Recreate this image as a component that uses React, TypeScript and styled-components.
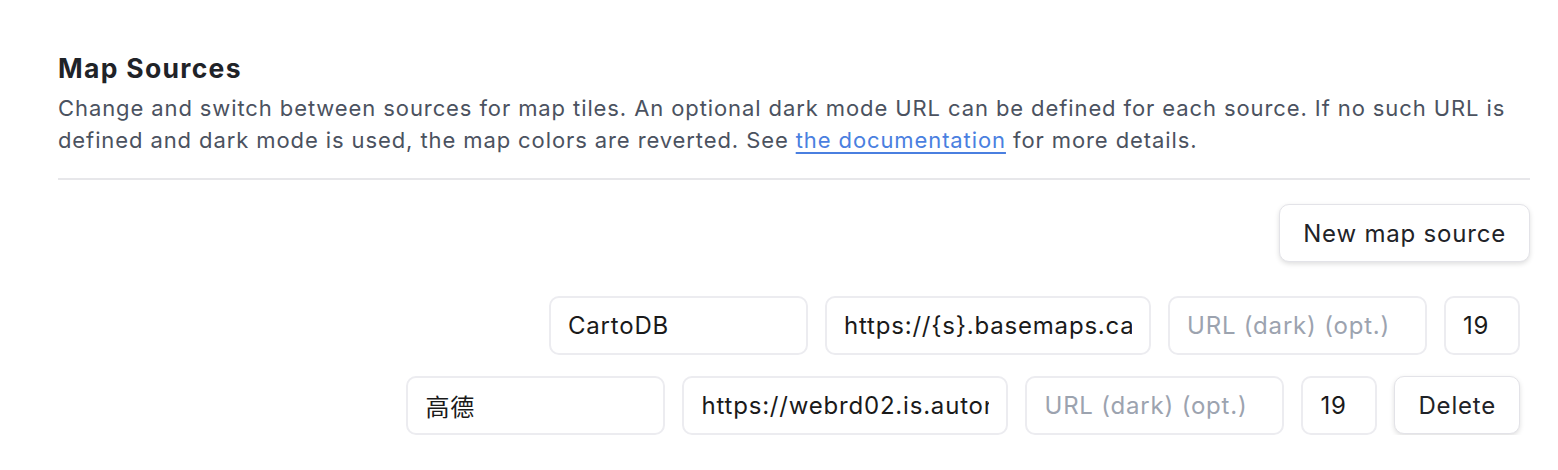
import React from "react";
import styled, { createGlobalStyle } from "styled-components";

const Global = createGlobalStyle`
  html, body { margin: 0; padding: 0; background: #ffffff; }
  body { font-family: Inter, "Noto Sans CJK SC", "Noto Sans", sans-serif; }
  * { box-sizing: border-box; }
`;

const Page = styled.div`
  padding: 49px 28px 0 58px;
`;

const Title = styled.h2`
  margin: 0;
  font-size: 26.5px;
  line-height: 38px;
  font-weight: 700;
  letter-spacing: 1.3px;
  color: #1f2328;
`;

const Description = styled.p`
  margin: 5px 0 0;
  font-size: 22px;
  line-height: 32px;
  letter-spacing: 0.9px;
  color: #4b5260;
`;

const DocLink = styled.a`
  color: #4a7fe0;
  text-decoration: underline;
  text-decoration-thickness: 1.5px;
  text-underline-offset: 4px;
`;

const Divider = styled.hr`
  margin: 22px 0 0;
  border: none;
  border-top: 2px solid #e7e7ea;
`;

const Toolbar = styled.div`
  display: flex;
  justify-content: flex-end;
  margin-top: 24px;
`;

const Button = styled.button`
  height: 58px;
  padding: 0 23px;
  font-family: inherit;
  font-size: 24px;
  letter-spacing: 0.8px;
  color: #1f2328;
  background: #ffffff;
  border: 1.5px solid #e3e3e8;
  border-radius: 10px;
  box-shadow: 0 2px 5px rgba(0, 0, 0, 0.13);
  cursor: pointer;
`;

const Rows = styled.div`
  display: flex;
  flex-direction: column;
  gap: 21px;
  margin-top: 34px;
  padding-right: 10px;
`;

const Row = styled.div`
  display: flex;
  justify-content: flex-end;
  gap: 17px;
`;

const Input = styled.input<{ $w: number }>`
  width: ${(p) => p.$w}px;
  height: 59px;
  padding: 0 17px;
  font-family: inherit;
  font-size: 24px;
  letter-spacing: 0.8px;
  color: #1a1a1a;
  background: #ffffff;
  border: 2px solid #ececf0;
  border-radius: 10px;
  outline: none;
  &::placeholder { color: #9ca3af; }
`;

const sources = [
  { name: "CartoDB", url: "https://{s}.basemaps.cartocdn.com/light_all/{z}/{x}/{y}.png", zoom: "19", deletable: false },
  { name: "高德", url: "https://webrd02.is.autonavi.com/appmaptile?lang=zh_cn&size=1&scale=1&style=8&x={x}&y={y}&z={z}", zoom: "19", deletable: true },
];

export default function App() {
  return (
    <Page>
      <Global />
      <Title>Map Sources</Title>
      <Description>
        Change and switch between sources for map tiles. An optional dark mode URL can be defined for each source. If no such URL is
        <br />
        defined and dark mode is used, the map colors are reverted. See <DocLink href="#">the documentation</DocLink> for more details.
      </Description>
      <Divider />
      <Toolbar>
        <Button>New map source</Button>
      </Toolbar>
      <Rows>
        {sources.map((s) => (
          <Row key={s.name}>
            <Input $w={259} defaultValue={s.name} />
            <Input $w={326} defaultValue={s.url} />
            <Input $w={259} placeholder="URL (dark) (opt.)" />
            <Input $w={76} defaultValue={s.zoom} />
            {s.deletable && <Button>Delete</Button>}
          </Row>
        ))}
      </Rows>
    </Page>
  );
}
